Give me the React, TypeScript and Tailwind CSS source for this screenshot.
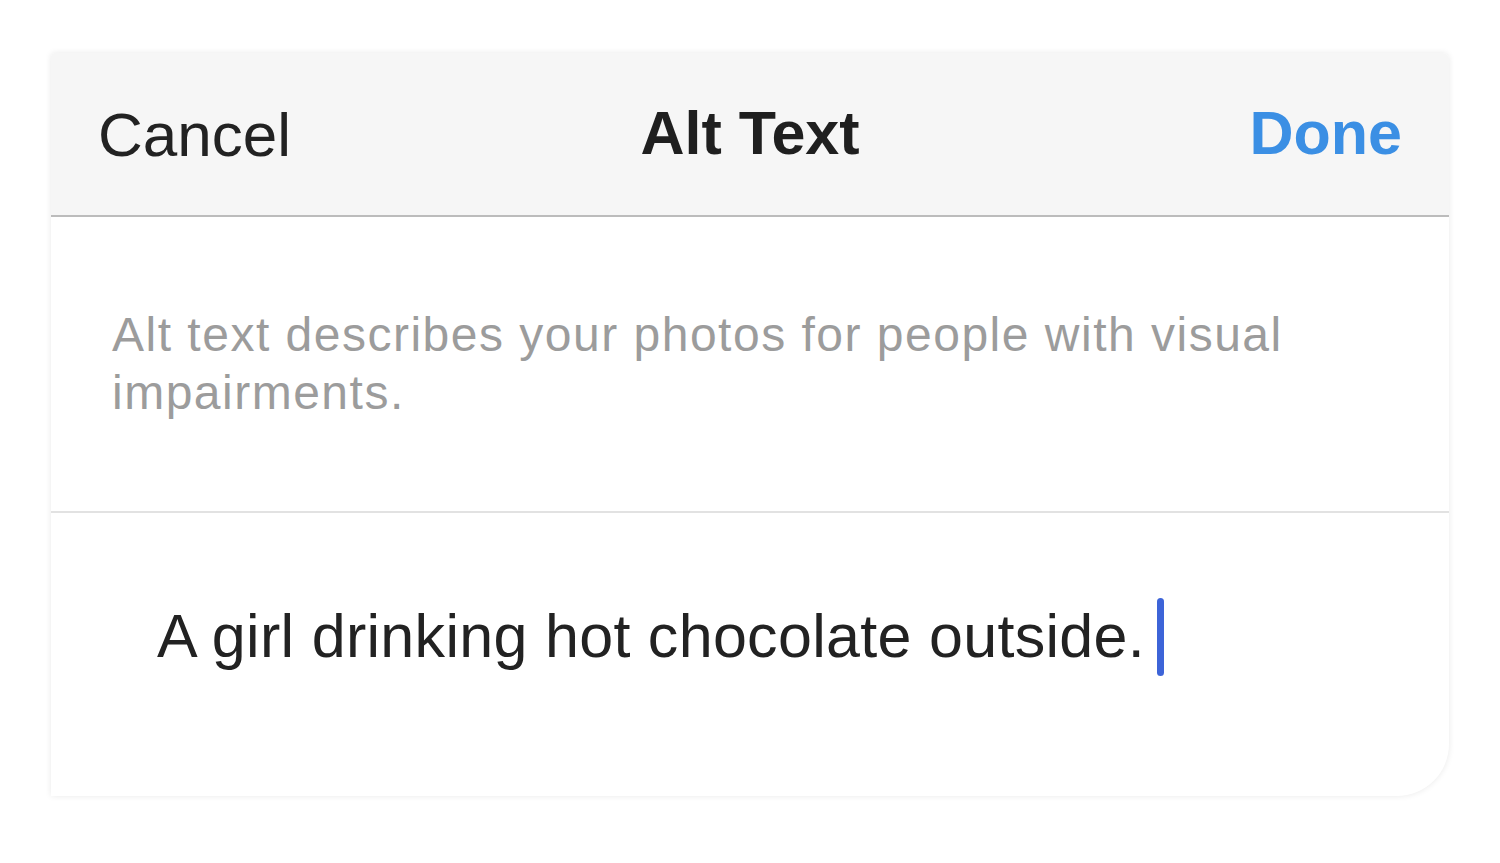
export default function App() {
  return (
    <div className="min-h-[863px] w-full bg-white pl-[51px] pt-[53px] font-['Liberation_Sans',Arial,sans-serif]">
      <div className="flex w-[1398px] h-[743px] flex-col overflow-hidden rounded-tl-[4px] rounded-tr-[6px] rounded-br-[52px] bg-white shadow-[0_0_6px_rgba(0,0,0,0.09)]">
        {/* header */}
        <div className="flex h-[164px] shrink-0 items-center justify-between border-b-2 border-[#bcbcbc] bg-[#f6f6f6] px-[47px]">
          <button className="w-[200px] text-left text-[62px] text-[#222]">Cancel</button>
          <div className="text-[61px] font-bold text-[#1f1f1f]">Alt Text</div>
          <button className="w-[200px] text-right text-[61px] font-bold text-[#3b8fe4]">Done</button>
        </div>

        {/* help text */}
        <div className="flex h-[296px] shrink-0 items-center border-b-2 border-[#e2e2e2] pl-[61px] pr-[60px]">
          <p className="text-[48px] leading-[58px] tracking-[1.5px] text-[#9c9c9c]">
            Alt text describes your photos for people with visual impairments.
          </p>
        </div>

        {/* input */}
        <div className="flex items-center pl-[106px] pt-[78px]">
          <span className="text-[61px] tracking-[0.3px] text-[#222]">A girl drinking hot chocolate outside.</span>
          <span className="ml-[12px] h-[78px] w-[7px] rounded-full bg-[#3d64d8]" />
        </div>
      </div>
    </div>
  );
}
